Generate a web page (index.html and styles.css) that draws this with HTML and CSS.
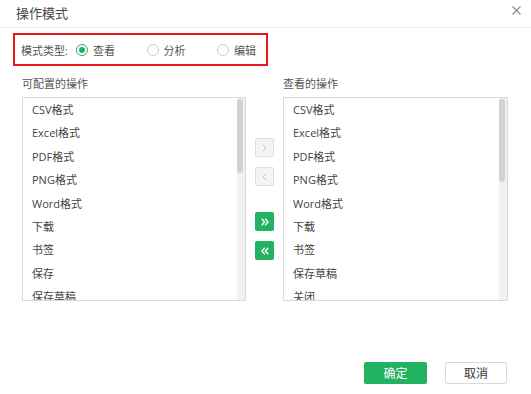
FILE: index.html
```html
<!DOCTYPE html>
<html lang="zh-CN">
<head>
    <meta charset="UTF-8">
    <meta name="viewport" content="width=device-width, initial-scale=1.0">
    <title>操作模式</title>
    <link rel="stylesheet" href="styles.css">
</head>
<body>
    <div class="dialog">
        <div class="header">
            <span class="title">操作模式</span>
            <svg class="close" width="9" height="9" viewBox="0 0 9 9"><path d="M0.5 0.5L8.5 8.5M8.5 0.5L0.5 8.5" stroke="#8a8a8a" stroke-width="1.1" fill="none"/></svg>
        </div>

        <!-- mode type -->
        <div class="mode-box">
            <span class="mode-label">模式类型:</span>
            <label class="option"><span class="radio checked"></span>查看</label>
            <label class="option"><span class="radio"></span>分析</label>
            <label class="option"><span class="radio"></span>编辑</label>
        </div>

        <div class="lists">
            <div class="column">
                <div class="list-title">可配置的操作</div>
                <div class="list-box">
                    <ul class="list">
                        <li>CSV格式</li>
                        <li>Excel格式</li>
                        <li>PDF格式</li>
                        <li>PNG格式</li>
                        <li>Word格式</li>
                        <li>下载</li>
                        <li>书签</li>
                        <li>保存</li>
                        <li>保存草稿</li>
                    </ul>
                    <div class="scrollbar"><div class="thumb left-thumb"></div></div>
                </div>
            </div>

            <div class="move-buttons">
                <button class="move gray"><svg width="5" height="8" viewBox="0 0 5 8"><path d="M0.8 0.8L4 4L0.8 7.2" stroke="#c2c2c2" fill="none"/></svg></button>
                <button class="move gray"><svg width="5" height="8" viewBox="0 0 5 8"><path d="M4.2 0.8L1 4L4.2 7.2" stroke="#c2c2c2" fill="none"/></svg></button>
                <button class="move green all"><svg width="8" height="8" viewBox="0 0 8 8"><path d="M0.8 0.8L3.6 4L0.8 7.2M4.2 0.8L7 4L4.2 7.2" stroke="#fff" stroke-width="1.3" fill="none"/></svg></button>
                <button class="move green"><svg width="8" height="8" viewBox="0 0 8 8"><path d="M3.8 0.8L1 4L3.8 7.2M7.2 0.8L4.4 4L7.2 7.2" stroke="#fff" stroke-width="1.3" fill="none"/></svg></button>
            </div>

            <div class="column right">
                <div class="list-title">查看的操作</div>
                <div class="list-box">
                    <ul class="list">
                        <li>CSV格式</li>
                        <li>Excel格式</li>
                        <li>PDF格式</li>
                        <li>PNG格式</li>
                        <li>Word格式</li>
                        <li>下载</li>
                        <li>书签</li>
                        <li>保存草稿</li>
                        <li>关闭</li>
                    </ul>
                    <div class="scrollbar"><div class="thumb right-thumb"></div></div>
                </div>
            </div>
        </div>

        <div class="footer">
            <button class="btn ok">确定</button>
            <button class="btn cancel">取消</button>
        </div>
    </div>
</body>
</html>
```

FILE: styles.css
```css
*,::after,::before{margin: 0; padding: 0; box-sizing: border-box;}
body{font-family: "Open Sans", "Noto Sans CJK SC", sans-serif; font-size: 11px; color: #444; background: #fff;}
.dialog{width: 531px; height: 394px; background: #fff;}
.header{height: 28px; display: flex; justify-content: space-between; align-items: center; padding: 0 10px 3px 16px; border-bottom: 1px solid #ececec;}
.title{font-size: 13px; color: #444;}
.close{display: block; margin-top: -4px;}

.mode-box{width: 255px; height: 33px; margin: 5px 0 0 13px; border: 2px solid #e8171b; display: flex; align-items: center; padding-left: 6px; color: #555;}
.mode-label{width: 55px; flex-shrink: 0; white-space: nowrap;}
.option{width: 70.5px; flex-shrink: 0; display: flex; align-items: center; gap: 5px; white-space: nowrap;}
.option:last-child{width: auto;}
.radio{width: 12px; height: 12px; border: 1px solid #ccc; border-radius: 50%; position: relative; background: #fff;}
.radio.checked{border-color: #22b163;}
.radio.checked::after{content: ""; position: absolute; left: 2px; top: 2px; width: 6px; height: 6px; border-radius: 50%; background: #22b163;}

.lists{display: flex; margin: 9px 0 0 22px;}
.column{width: 224px;}
.column.right{width: 225px;}
.list-title{height: 18px; line-height: 18px; color: #555; margin-bottom: 4px;}
.list-box{height: 204px; border: 1px solid #d9d9d9; display: flex; overflow: hidden;}
.list{list-style: none; flex: 1; overflow: hidden;}
.list li{height: 23.4px; line-height: 23.4px; padding-left: 9px; color: #444; white-space: nowrap;}
.scrollbar{width: 8px; background: #f1f1f1; padding: 1px 1px 0 0;}
.thumb{width: 6px; background: #d2d2d2; border-radius: 3px;}
.left-thumb{height: 74px;}
.right-thumb{height: 83px;}

.move-buttons{width: 37px; padding: 63px 0 0 9px; display: flex; flex-direction: column;}
.move{width: 19px; height: 19px; border-radius: 2px; display: flex; align-items: center; justify-content: center; cursor: pointer; margin-bottom: 10px;}
.move svg{display: block;}
.move.gray{background: #f4f4f4; border: 1px solid #dedede;}
.move.green{background: #21b262; border: none;}
.move.all{margin-top: 16px;}

.footer{display: flex; justify-content: flex-end; gap: 18px; padding-right: 24px; margin-top: 61px;}
.btn{height: 22px; font-family: "Open Sans", "Noto Sans CJK SC", sans-serif; font-size: 12px; border-radius: 2px; cursor: pointer;}
.btn.ok{width: 63px; background: #21b262; border: none; color: #fff;}
.btn.cancel{width: 62px; background: #fff; border: 1px solid #d9d9d9; color: #333;}
```
